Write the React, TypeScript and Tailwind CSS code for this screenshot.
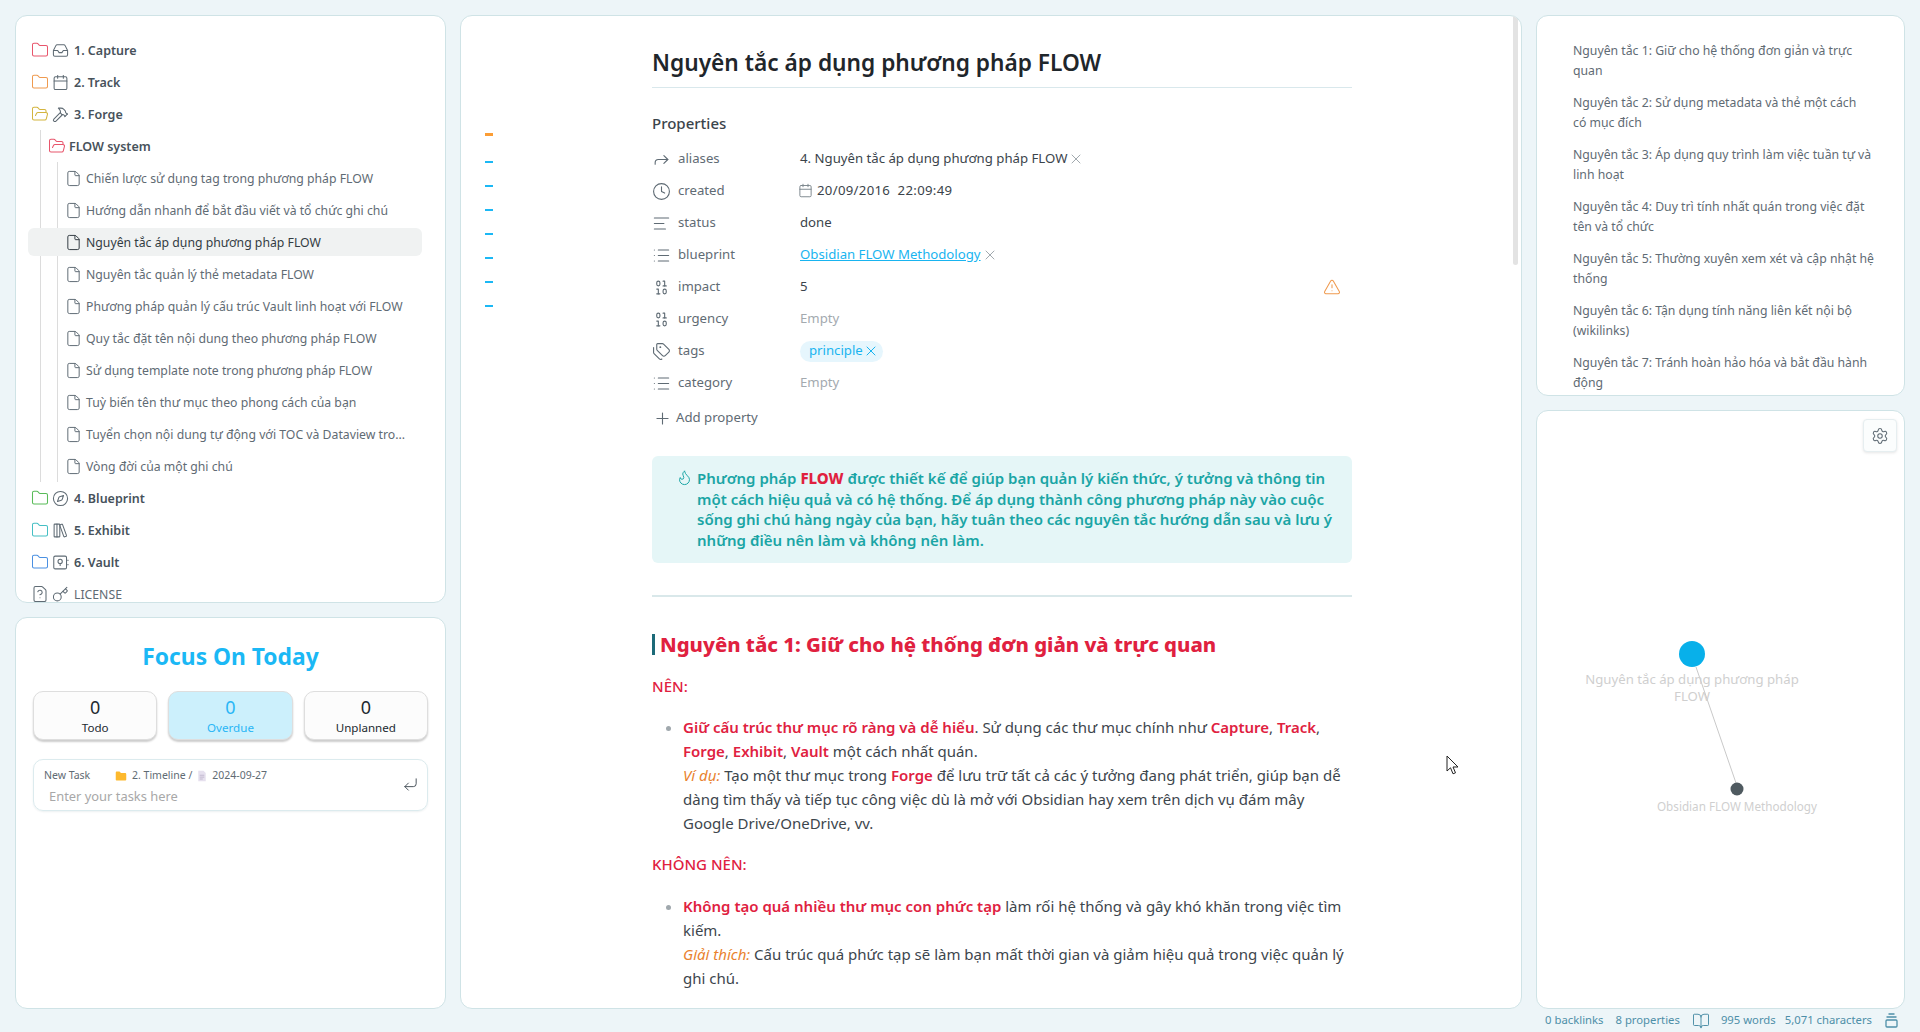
import {
  BookOpen, Binary, Calendar, Clock, Compass, CornerDownLeft, File, FileQuestion, Flame, Folder, FolderOpen,
  Forward, Hammer, Inbox, Key, LibraryBig, List, Plus, Settings, Tags, AlignLeft, TriangleAlert, X,
} from 'lucide-react';

const VaultIcon = ({ size, strokeWidth, className }: { size?: number; strokeWidth?: number; className?: string }) => (
  <svg width={size} height={size} viewBox="0 0 24 24" fill="none" stroke="currentColor" strokeWidth={strokeWidth} className={className}>
    <rect x="2.500" y="3" width="18" height="18" rx="2" />
    <circle cx="11.500" cy="10.500" r="3" />
    <path d="M11.500 13.500V17M22.500 8v2M22.500 14v2" />
  </svg>
);

const topFolders = [
  { name: '1. Capture', color: 'text-[#e8566c]', Icon: Inbox, open: false },
  { name: '2. Track', color: 'text-[#ef9a4f]', Icon: Calendar, open: false },
  { name: '3. Forge', color: 'text-[#d4b53f]', Icon: Hammer, open: true },
];

const bottomFolders = [
  { name: '4. Blueprint', color: 'text-[#58bb58]', Icon: Compass, open: false },
  { name: '5. Exhibit', color: 'text-[#45bfc4]', Icon: LibraryBig, open: false },
  { name: '6. Vault', color: 'text-[#4a90e2]', Icon: VaultIcon, open: false },
];

const files = [
  'Chiến lược sử dụng tag trong phương pháp FLOW',
  'Hướng dẫn nhanh để bắt đầu viết và tổ chức ghi chú',
  'Nguyên tắc áp dụng phương pháp FLOW',
  'Nguyên tắc quản lý thẻ metadata FLOW',
  'Phương pháp quản lý cấu trúc Vault linh hoạt với FLOW',
  'Quy tắc đặt tên nội dung theo phương pháp FLOW',
  'Sử dụng template note trong phương pháp FLOW',
  'Tuỳ biến tên thư mục theo phong cách của bạn',
  'Tuyển chọn nội dung tự động với TOC và Dataview tro...',
  'Vòng đời của một ghi chú',
];

const toc = [
  ['Nguyên tắc 1: Giữ cho hệ thống đơn giản và trực', 'quan'],
  ['Nguyên tắc 2: Sử dụng metadata và thẻ một cách', 'có mục đích'],
  ['Nguyên tắc 3: Áp dụng quy trình làm việc tuần tự và', 'linh hoạt'],
  ['Nguyên tắc 4: Duy trì tính nhất quán trong việc đặt', 'tên và tổ chức'],
  ['Nguyên tắc 5: Thường xuyên xem xét và cập nhật hệ', 'thống'],
  ['Nguyên tắc 6: Tận dụng tính năng liên kết nội bộ', '(wikilinks)'],
  ['Nguyên tắc 7: Tránh hoàn hảo hóa và bắt đầu hành', 'động'],
];

type IconType = React.ComponentType<{ size?: number; strokeWidth?: number; className?: string }>;

const FolderRow = ({ name, color, Icon, open }: { name: string; color: string; Icon: IconType; open: boolean }) => {
  const FolderIcon = open ? FolderOpen : Folder;
  return (
    <div className="flex h-8 items-center pl-[15px]">
      <FolderIcon size={18} strokeWidth={1.4} className={color} />
      <Icon size={17} strokeWidth={1.5} className="ml-[3px] text-[#5f6b74]" />
      <span className="ml-[5px] pt-[2px] text-[12.5px] font-semibold text-[#47525b]">{name}</span>
    </div>
  );
};

const Prop = ({ Icon, label, children }: { Icon: IconType; label: string; children: React.ReactNode }) => (
  <div className="flex h-8 items-center">
    <Icon size={19} strokeWidth={1.4} className="text-[#5f6b74]" />
    <span className="ml-[7px] w-[122px] text-[13.2px] text-[#5f6b74]">{label}</span>
    <div className="flex flex-1 items-center text-[13.2px] text-[#3b444b]">{children}</div>
  </div>
);

const R = ({ children }: { children: React.ReactNode }) => <span className="font-semibold text-[#e0213f]">{children}</span>;
const O = ({ children }: { children: React.ReactNode }) => <em className="text-[#e9822e]">{children}</em>;

export default function App() {
  return (
    <div className="flex h-[1032px] w-[1920px] flex-col overflow-hidden bg-[#edf5f8] font-['Noto_Sans',sans-serif]">
      <div className="grid h-[1009px] grid-cols-[431px_1062px_369px] gap-[14px] px-[15px] pt-[15px]">
        {/* left column */}
        <div className="flex flex-col gap-[14px]">
          <div className="h-[588px] overflow-hidden rounded-xl border border-[#cfe3e6] bg-white pt-[18px]">
            {topFolders.map((f) => <FolderRow key={f.name} {...f} />)}
            <div className="ml-[24px] border-l border-[#dcdcdc]">
              <div className="flex h-8 items-center pl-[7px]">
                <FolderOpen size={18} strokeWidth={1.4} className="text-[#e8566c]" />
                <span className="ml-[3px] pt-[2px] text-[12.5px] font-semibold text-[#47525b]">FLOW system</span>
              </div>
              <div className="ml-[16px] border-l border-[#dcdcdc]">
                {files.map((name, i) => (
                  <div key={name} className="flex h-8 items-center">
                    <div className={`-ml-[30px] flex h-7 w-[394px] items-center rounded-md pl-[37px] ${i === 2 ? 'bg-[#f0f2f2]' : ''}`}>
                      <File size={17} strokeWidth={1.4} className={i === 2 ? 'text-[#333c43]' : 'text-[#5f6b74]'} />
                      <span className={`ml-[4px] pt-[2px] text-[12.25px] whitespace-nowrap ${i === 2 ? 'text-[#333c43]' : 'text-[#5f6b74]'}`}>{name}</span>
                    </div>
                  </div>
                ))}
              </div>
            </div>
            {bottomFolders.map((f) => <FolderRow key={f.name} {...f} />)}
            <div className="flex h-8 items-center pl-[15px]">
              <FileQuestion size={18} strokeWidth={1.4} className="text-[#5f6b74]" />
              <Key size={17} strokeWidth={1.5} className="ml-[3px] text-[#5f6b74]" />
              <span className="ml-[5px] pt-[2px] text-[12.25px] text-[#5f6b74]">LICENSE</span>
            </div>
          </div>

          <div className="flex-1 rounded-xl border border-[#cfe3e6] bg-white px-[17px] pt-[21px]">
            <div className="text-center text-[22.8px] leading-9 font-bold text-[#1bb8f5]">Focus On Today</div>
            <div className="mt-[16px] grid grid-cols-3 gap-[11px]">
              {[
                ['Todo', false],
                ['Overdue', true],
                ['Unplanned', false],
              ].map(([label, active]) => (
                <div
                  key={label as string}
                  className={`flex h-[49px] flex-col items-center justify-center rounded-[10px] border border-[#dedede] shadow-[0_2px_2px_rgba(0,0,0,0.2)] ${active ? 'bg-[#ccf0fc] text-[#29b6f6]' : 'bg-[#fcfcfc] text-[#222a30]'}`}
                >
                  <span className="text-[18px] leading-[24px]">0</span>
                  <span className="text-[11.6px] leading-[18px]">{label as string}</span>
                </div>
              ))}
            </div>
            <div className="relative mt-[19px] h-[52px] rounded-[10px] border border-[#dcebee] pt-[6px] pl-[10px] shadow-[0_1px_2px_rgba(0,60,80,0.08)]">
              <div className="flex h-[20px] items-center text-[10.5px] text-[#5f6b74]">
                <span className="w-[71px]">New Task</span>
                <svg width="12" height="12" viewBox="0 0 16 16" className="mr-[5px]">
                  <path d="M1 3.500C1 2.700 1.600 2 2.500 2H6l2 2h5.500c.8 0 1.500.7 1.500 1.500v7c0 .8-.7 1.500-1.500 1.500h-11C1.700 14 1 13.300 1 12.500z" fill="#fdb92e" />
                </svg>
                <span>2. Timeline /</span>
                <svg width="12" height="12" viewBox="0 0 16 16" className="mx-[4px]">
                  <path d="M3 1h7l3 3v11H3z" fill="#e6e0ee" />
                  <path d="M5 7h6M5 9.500h6M5 12h4" stroke="#b7adc6" strokeWidth="1" />
                </svg>
                <span>2024-09-27</span>
              </div>
              <div className="pl-[5px] text-[12.9px] leading-[20px] text-[#a8a8a8]">Enter your tasks here</div>
              <CornerDownLeft size={17} strokeWidth={1.4} className="absolute top-[16px] right-[8px] text-[#4a545c]" />
            </div>
          </div>
        </div>

        {/* editor */}
        <div className="relative flex overflow-hidden rounded-xl border border-[#cfe3e6] bg-white">
          <div className="flex w-[191px] shrink-0 flex-col gap-[22px] pt-[117px] pl-[24px]">
            <div className="mb-[3px] h-[3px] w-2 bg-[#fb9d35]" />
            {[1, 2, 3, 4, 5, 6, 7].map((n) => <div key={n} className="h-[2px] w-2 bg-[#1bb8f5]" />)}
          </div>
          <div className="w-[700px] shrink-0">
            <h1 className="border-b border-[#d9e8ec] pt-[28px] pb-[6px] text-[22.7px] leading-[37px] font-semibold text-[#1f262b]">
              Nguyên tắc áp dụng phương pháp FLOW
            </h1>
            <div className="mt-[23px] text-[15px] leading-6 font-medium text-[#3b444b]">Properties</div>
            <div className="mt-[8px]">
              <Prop Icon={Forward} label="aliases">
                4. Nguyên tắc áp dụng phương pháp FLOW
                <X size={16} strokeWidth={1.4} className="ml-[1px] text-[#9aa2a8]" />
              </Prop>
              <Prop Icon={Clock} label="created">
                <Calendar size={15} strokeWidth={1.5} className="mr-[4px] -ml-[2px] text-[#7a848b]" />
                <span className="tracking-[0.3px]">20/09/2016&nbsp; 22:09:49</span>
              </Prop>
              <Prop Icon={AlignLeft} label="status">done</Prop>
              <Prop Icon={List} label="blueprint">
                <a className="text-[#18b4f0] underline">Obsidian FLOW Methodology</a>
                <X size={16} strokeWidth={1.4} className="ml-[1px] text-[#9aa2a8]" />
              </Prop>
              <Prop Icon={Binary} label="impact">
                5
                <TriangleAlert size={18} strokeWidth={1.4} className="mr-[11px] ml-auto text-[#ef9a4f]" />
              </Prop>
              <Prop Icon={Binary} label="urgency"><span className="text-[#a3aaaf]">Empty</span></Prop>
              <Prop Icon={Tags} label="tags">
                <span className="flex h-[21px] items-center rounded-full bg-[#e6f6fd] pr-[4px] pl-[9px] text-[#18b4f0]">
                  principle
                  <X size={16} strokeWidth={1.5} />
                </span>
              </Prop>
              <Prop Icon={List} label="category"><span className="text-[#a3aaaf]">Empty</span></Prop>
            </div>
            <div className="mt-[3px] flex h-8 items-center pl-[1px] text-[13.2px] text-[#5f6b74]">
              <Plus size={19} strokeWidth={1.4} />
              <span className="ml-[4px]">Add property</span>
            </div>

            <div className="relative mt-[22px] h-[107px] rounded-md bg-[#e5f6f7] pt-[12px] pl-[45px] text-[15px] leading-[20.700px] font-semibold text-[#1aa5a5]">
              <Flame size={17} strokeWidth={1.4} className="absolute top-[13px] left-[24px]" />
              Phương pháp <span className="font-extrabold text-[#e0213f]">FLOW</span> được thiết kế để giúp bạn quản lý kiến thức, ý tưởng và thông tin<br />
              một cách hiệu quả và có hệ thống. Để áp dụng thành công phương pháp này vào cuộc<br />
              sống ghi chú hàng ngày của bạn, hãy tuân theo các nguyên tắc hướng dẫn sau và lưu ý<br />
              những điều nên làm và không nên làm.
            </div>
            <div className="mt-[32px] h-[2px] bg-[#d9e8ea]" />
            <h2 className="mt-[35px] flex h-[24px] items-center text-[20.3px] font-extrabold text-[#e0213f]">
              <span className="mr-[5px] h-[21px] w-[3px] bg-[#1c6a78]" />
              Nguyên tắc 1: Giữ cho hệ thống đơn giản và trực quan
            </h2>
            <p className="mt-[18px] text-[15px] leading-6 font-medium text-[#e0213f]">NÊN:</p>
            <ul className="mt-[17px] list-disc pl-[31px] text-[15px] leading-6 text-[#3d464d] marker:text-[#a0a8ad]">
              <li>
                <R>Giữ cấu trúc thư mục rõ ràng và dễ hiểu</R>. Sử dụng các thư mục chính như <R>Capture</R>, <R>Track</R>,<br />
                <R>Forge</R>, <R>Exhibit</R>, <R>Vault</R> một cách nhất quán.<br />
                <O>Ví dụ:</O> Tạo một thư mục trong <R>Forge</R> để lưu trữ tất cả các ý tưởng đang phát triển, giúp bạn dễ<br />
                dàng tìm thấy và tiếp tục công việc dù là mở với Obsidian hay xem trên dịch vụ đám mây<br />
                Google Drive/OneDrive, vv.
              </li>
            </ul>
            <p className="mt-[17px] text-[15px] leading-6 font-medium text-[#e0213f]">KHÔNG NÊN:</p>
            <ul className="mt-[18px] list-disc pl-[31px] text-[15px] leading-6 text-[#3d464d] marker:text-[#a0a8ad]">
              <li>
                <R>Không tạo quá nhiều thư mục con phức tạp</R> làm rối hệ thống và gây khó khăn trong việc tìm<br />
                kiếm.<br />
                <O>Giải thích:</O> Cấu trúc quá phức tạp sẽ làm bạn mất thời gian và giảm hiệu quả trong việc quản lý<br />
                ghi chú.
              </li>
            </ul>
          </div>
          {/* scrollbar and mouse pointer lie over the page */}
          <div className="absolute top-0 right-[3px] h-[249px] w-[5px] rounded-b bg-[#e3e3e3]" />
          <svg width="14" height="20" viewBox="0 0 14 20" className="absolute top-[739px] left-[985px]">
            <path d="M1 1v15l3.500-3.200 2.500 6 2.500-1-2.500-5.800h5z" fill="#fff" stroke="#222" strokeWidth="1" />
          </svg>
        </div>

        {/* right column */}
        <div className="flex flex-col gap-[14px]">
          <div className="h-[381px] overflow-hidden rounded-xl border border-[#cfe3e6] bg-white pt-[25px] pl-[36px]">
            {toc.map(([a, b]) => (
              <p key={a} className="mb-3 text-[12.25px] leading-5 whitespace-nowrap text-[#5f6b74]">
                {a}<br />{b}
              </p>
            ))}
          </div>
          <div className="relative flex-1 rounded-xl border border-[#cfe3e6] bg-white">
            <div className="absolute top-[8px] right-[7px] flex h-[33px] w-[34px] items-center justify-center rounded border border-[#e6eef0] bg-[#fbfdfd] shadow-[0_1px_3px_rgba(0,0,0,0.1)]">
              <Settings size={18} strokeWidth={1.4} className="text-[#5f6b74]" />
            </div>
            <svg width="367" height="596" className="absolute top-0 left-0">
              <line x1="159" y1="256" x2="199" y2="372" stroke="#c9c9c9" strokeWidth="1" />
              <circle cx="155" cy="243" r="13" fill="#08b0ea" />
              <circle cx="200" cy="378" r="6.500" fill="#4f5a60" />
            </svg>
            <div className="absolute top-[260px] left-[25px] w-[260px] text-center text-[13.2px] leading-[17px] whitespace-nowrap text-[#cfcfcf]">
              Nguyên tắc áp dụng phương pháp<br />FLOW
            </div>
            <div className="absolute top-[387px] left-[110px] w-[180px] text-center text-[11.7px] leading-[17px] whitespace-nowrap text-[#cfcfcf]">
              Obsidian FLOW Methodology
            </div>
          </div>
        </div>
      </div>

      <div className="flex h-[23px] items-center justify-end pr-[22px] text-[11.3px] text-[#4d8fa8]">
        <span>0 backlinks</span>
        <span className="ml-[12px]">8 properties</span>
        <BookOpen size={18} strokeWidth={1.3} className="mr-[11px] ml-[12px]" />
        <span>995 words</span>
        <span className="ml-[9px]">5,071 characters</span>
        <svg width="13" height="15" viewBox="0 0 13 15" fill="none" stroke="currentColor" strokeWidth="1.300" className="ml-[13px]">
          <path d="M3.500 1h6M1.500 4h10" />
          <rect x="1" y="7" width="11" height="7" rx="1" />
        </svg>
      </div>
    </div>
  );
}
